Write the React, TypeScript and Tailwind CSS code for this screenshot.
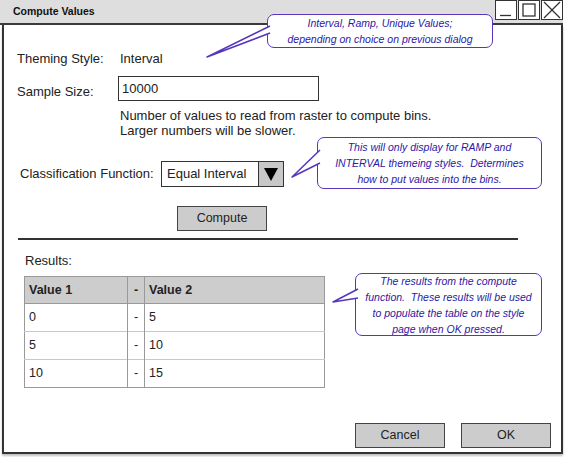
import React from "react";

const ink = "#2a2a2a";

function WinButton({ kind }: { kind: "min" | "max" | "close" }) {
  return (
    <div className="flex h-[20px] w-[22px] items-center justify-center border-[1.5px] border-[#333] bg-white">
      <svg width="20" height="18" viewBox="0 0 20 18" fill="none" stroke="#333" strokeWidth="1.3">
        {kind === "min" && <line x1="4" y1="14.5" x2="15" y2="14.5" />}
        {kind === "max" && <rect x="4" y="3" width="12" height="12" />}
        {kind === "close" && (
          <>
            <line x1="2" y1="1" x2="18" y2="17" />
            <line x1="18" y1="1" x2="2" y2="17" />
          </>
        )}
      </svg>
    </div>
  );
}

function Callout({
  className,
  lines,
}: {
  className: string;
  lines: string[];
}) {
  return (
    <div
      className={`absolute flex flex-col items-center justify-center rounded-[7px] border-[1.5px] border-[#5636bd] bg-white text-[10.5px] italic leading-[16px] text-[#2c17a6] ${className}`}
    >
      {lines.map((l) => (
        <span key={l} className="whitespace-pre">
          {l}
        </span>
      ))}
    </div>
  );
}

function GreyButton({ label, className = "" }: { label: string; className?: string }) {
  return (
    <div
      className={`flex h-[25px] w-[90px] items-center justify-center border-[1.5px] border-[#444] bg-[#cccccc] text-[12.5px] text-[#222] ${className}`}
    >
      {label}
    </div>
  );
}

const rows = [
  ["0", "5"],
  ["5", "10"],
  ["10", "15"],
];

export default function App() {
  return (
    <div className="relative h-[457px] w-[565px] overflow-hidden bg-white font-['Liberation_Sans',Arial,sans-serif] text-[13px] text-[#222]">
      <div className="flex h-[454px] w-[563px] flex-col">
        {/* Title bar */}
        <div className="flex h-[25px] shrink-0 items-start justify-between border-b-2 border-[#3a3a3a] bg-[#dedede]">
          <span className="pl-[13px] pt-[4px] text-[10.5px] font-bold leading-[14px] text-[#111]">
            Compute Values
          </span>
          <div className="flex gap-[1px]">
            <WinButton kind="min" />
            <WinButton kind="max" />
            <WinButton kind="close" />
          </div>
        </div>

        {/* Body */}
        <div className="ml-[2px] flex flex-1 flex-col border-x-2 border-b-2 border-[#333] pl-[13px] shadow-[0_2px_2px_rgba(0,0,0,0.25)]">
          <div className="mt-[24px] flex h-[20px] items-center">
            <span className="w-[103px]">Theming Style:</span>
            <span>Interval</span>
          </div>

          <div className="mt-[7px] flex">
            <span className="w-[101px] pt-[8px] leading-[16px]">Sample Size:</span>
            <div className="flex h-[25px] w-[201px] items-center border-[1.5px] border-[#333] pl-[3px]">
              10000
            </div>
          </div>

          <div className="ml-[103px] mt-[7px] leading-[15px]">
            <p>Number of values to read from raster to compute bins.</p>
            <p>Larger numbers will be slower.</p>
          </div>

          <div className="ml-[3px] mt-[23px] flex items-center">
            <span className="w-[141px]">Classification Function:</span>
            <div className="flex h-[26px] w-[123px] border-[1.5px] border-[#333]">
              <span className="flex flex-1 items-center pl-[5px]">Equal Interval</span>
              <div className="flex w-[25px] items-center justify-center border-l-[1.5px] border-[#333] bg-[#c8c8c8]">
                <svg width="16" height="16" viewBox="0 0 16 16">
                  <polygon points="1,2 15,2 8,15" fill="#000" />
                </svg>
              </div>
            </div>
          </div>

          <GreyButton label="Compute" className="ml-[160px] mt-[19px]" />

          <div className="ml-[1px] mt-[7px] h-[2px] w-[500px] bg-[#333]" />

          <span className="ml-[8px] mt-[13px] leading-[16px]">Results:</span>

          <table className="ml-[7px] mt-[7px] w-[301px] border-collapse border border-[#999] text-[12.5px]">
            <thead>
              <tr className="h-[27px] bg-[#cdcdcd] text-left font-bold">
                <th className="w-[103px] border-b border-r border-[#999] pl-[4px]">Value 1</th>
                <th className="w-[17px] border-b border-r border-[#999] text-center">-</th>
                <th className="border-b border-[#999] pl-[4px]">Value 2</th>
              </tr>
            </thead>
            <tbody>
              {rows.map(([a, b]) => (
                <tr key={a} className="h-[28px] border-b border-[#c8c8c8] last:border-b-0">
                  <td className="border-r border-[#999] pl-[4px]">{a}</td>
                  <td className="border-r border-[#999] text-center">-</td>
                  <td className="pl-[4px]">{b}</td>
                </tr>
              ))}
            </tbody>
          </table>

          <div className="mb-[4px] mr-[10px] mt-auto flex justify-end gap-[16px]">
            <GreyButton label="Cancel" />
            <GreyButton label="OK" />
          </div>
        </div>
      </div>

      {/* Annotations */}
      <Callout
        className="left-[267px] top-[14px] h-[34px] w-[226px]"
        lines={["Interval, Ramp, Unique Values;", "depending on choice on previous dialog"]}
      />
      <Callout
        className="left-[317px] top-[137px] h-[52px] w-[225px]"
        lines={[
          "This will only display for RAMP and",
          "INTERVAL themeing styles.  Determines",
          "how to put values into the bins.",
        ]}
      />
      <Callout
        className="left-[355px] top-[273px] h-[63px] w-[187px]"
        lines={[
          "The results from the compute",
          "function.  These results will be used",
          "to populate the table on the style",
          "page when OK pressed.",
        ]}
      />
      <svg className="pointer-events-none absolute left-0 top-0" width="565" height="457">
        <g fill="#fff" stroke="#5636bd" strokeWidth="1.5" strokeLinejoin="round">
          <polyline points="270,26 207,57 270,33" />
          <polyline points="320,150 292,177 320,163" />
          <polyline points="358,289 333,302 358,298" />
        </g>
      </svg>
    </div>
  );
}
